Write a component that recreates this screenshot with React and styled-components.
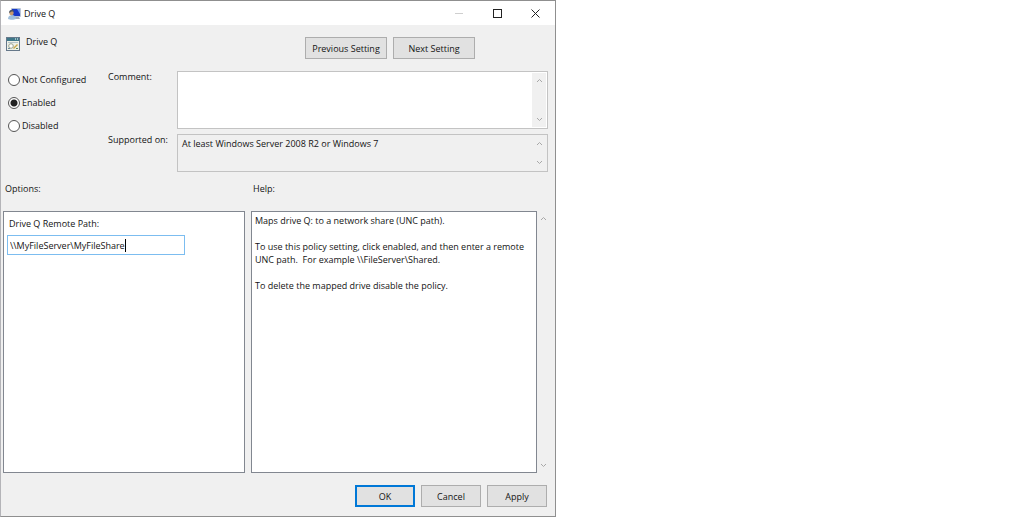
import React, { useState } from 'react';
import styled, { createGlobalStyle } from 'styled-components';

const GlobalStyle = createGlobalStyle`
  * {
    box-sizing: border-box;
  }
  body {
    margin: 0;
    background: #fff;
    color: #141414;
    font-family: 'Open Sans', 'Noto Sans', sans-serif;
    font-size: 9px;
    line-height: 13px;
  }
  button,
  input,
  textarea {
    font: inherit;
    color: inherit;
  }
`;

const Dialog = styled.main`
  display: flex;
  flex-direction: column;
  width: 100%;
  max-width: 556px;
  border: 1px solid #8f8f8f;
  border-left-color: #b4b4b8;
  background: #f0f0f0;
`;

const TitleBar = styled.header`
  display: flex;
  align-items: center;
  height: 24px;
  padding: 0 1px 0 7px;
  gap: 3px;
  background: #fff;
`;

const Title = styled.h1`
  flex: 1;
  margin: 0;
  font-size: 9px;
  font-weight: 400;
`;

const WindowButton = styled.button`
  display: flex;
  align-items: center;
  justify-content: center;
  width: 38px;
  height: 24px;
  padding: 0;
  border: 0;
  background: transparent;
  color: ${(props) => (props.disabled ? '#cfcfcf' : '#222')};
`;

const Heading = styled.section`
  display: flex;
  align-items: flex-start;
  padding: 12px 80px 0 5px;
  gap: 6px;
`;

const PolicyName = styled.h2`
  flex: 1;
  margin: 0;
  font-size: 9px;
  font-weight: 400;
  line-height: 10px;
`;

const Buttons = styled.div`
  display: flex;
  gap: 6px;
`;

const Button = styled.button`
  width: ${(props) => (props.$wide ? '82px' : '60px')};
  height: 22px;
  padding: 0;
  border: ${(props) => (props.$primary ? '2px solid #0078d7' : '1px solid #adadad')};
  background: #e1e1e1;
  white-space: nowrap;
`;

const Settings = styled.section`
  display: grid;
  grid-template-columns: 97px 65px 1fr;
  column-gap: 4px;
  padding: 12px 7px 0 6px;
`;

const States = styled.fieldset`
  display: flex;
  flex-direction: column;
  gap: 10px;
  margin: 0;
  padding: 2px 0 0;
  border: 0;
`;

const StateLabel = styled.label`
  display: flex;
  align-items: center;
  gap: 2px;
  height: 13px;
  white-space: nowrap;
`;

const Radio = styled.input`
  appearance: none;
  width: 12px;
  height: 12px;
  margin: 0 0 0 1px;
  border: 1px solid #555;
  border-radius: 50%;
  background: #fff;

  &:checked {
    background: radial-gradient(#222 0 3px, #fff 4px);
  }
`;

const Captions = styled.div`
  display: grid;
  grid-template-rows: 58px 38px;
  row-gap: 5px;
  line-height: 11px;
  white-space: nowrap;
`;

const Boxes = styled.div`
  display: grid;
  grid-template-rows: 58px 38px;
  row-gap: 5px;
`;

const ScrollBox = styled.div`
  display: flex;
  padding: 1px;
  border: 1px solid #c3c3c3;
  background: ${(props) => (props.$readOnly ? '#f0f0f0' : '#fff')};
`;

const TextArea = styled.textarea`
  flex: 1;
  min-width: 0;
  padding: 1px 3px;
  border: 0;
  outline: 0;
  resize: none;
  overflow: hidden;
  background: transparent;
`;

const Track = styled.div`
  display: flex;
  flex-direction: column;
  align-items: center;
  justify-content: space-between;
  width: ${(props) => (props.$outer ? '12px' : '14px')};
  padding: 5px 0;
  background: #f0f0f0;
  color: #a8a8a8;
`;

const Panels = styled.section`
  display: grid;
  grid-template-columns: 242px 1fr;
  column-gap: 6px;
  padding: 10px 6px 0 2px;
`;

const PanelTitle = styled.h3`
  height: 29px;
  margin: 0;
  padding-left: 2px;
  font-size: 9px;
  font-weight: 400;
`;

const Panel = styled.div`
  flex: 1;
  min-height: 262px;
  padding: 2px 3px;
  border: 1px solid #828790;
  background: #fff;
`;

const Options = styled.div`
  display: flex;
  flex-direction: column;
  gap: 5px;
  padding-top: 3px;
`;

const OptionLabel = styled.label`
  padding-left: 2px;
`;

const PathField = styled.div`
  display: flex;
  align-items: center;
  width: 178px;
  height: 20px;
  padding-left: 2px;
  border: 1px solid #7cbdf0;
`;

const PathInput = styled.input`
  field-sizing: content;
  max-width: 170px;
  padding: 0;
  border: 0;
  outline: 0;
  background: transparent;
  caret-color: transparent;
`;

const Caret = styled.span`
  width: 1px;
  height: 13px;
  background: #000;
`;

const Row = styled.div`
  display: flex;
`;

const HelpText = styled.p`
  margin: 0 0 13px;
  white-space: pre-wrap;
`;

const Footer = styled.footer`
  display: flex;
  justify-content: flex-end;
  gap: 6px;
  padding: 12px 8px 9px;
`;

function Chevron({ down }) {
  return (
    <svg width="7" height="5" viewBox="0 0 7 5" fill="none" stroke="currentColor" aria-hidden="true">
      <path d={down ? 'M1 1l2.5 2.5L6 1' : 'M1 4l2.5-2.5L6 4'} />
    </svg>
  );
}

function ScrollTrack({ outer }) {
  return (
    <Track $outer={outer}>
      <Chevron />
      <Chevron down />
    </Track>
  );
}

// monitor with a user in front of it
function WindowIcon() {
  return (
    <svg width="13" height="13" viewBox="0 0 13 13" aria-hidden="true">
      <rect x="3" y="1" width="10" height="9" rx="1" fill="#b9c4d6" />
      <rect x="4" y="2" width="8" height="7" fill="#1738c8" />
      <path d="M9 2h3v5z" fill="#6f9af0" />
      <path d="M7 10h4l1 2H6z" fill="#a6adb8" />
      <path d="M0 12c0-3 2-4 4-4s4 1 4 4c-2 1-6 1-8 0z" fill="#9fbfdd" />
      <circle cx="3.5" cy="6" r="2.2" fill="#c99a6a" />
      <path d="M1 6c0-4 5-4 5-1-2-1-3 0-5 1z" fill="#4a5365" />
    </svg>
  );
}

// settings sheet with a caption strip and a gear
function PolicyIcon() {
  return (
    <svg width="14" height="14" viewBox="0 0 14 14" aria-hidden="true">
      <rect x="0.5" y="0.5" width="13" height="13" fill="#eef0e6" stroke="#66788a" />
      <rect x="1" y="1" width="12" height="3" fill="#3e7788" />
      <path d="M9 2h1M11 2h1" stroke="#fff" />
      <path d="M2 5.5h10" stroke="#b7c4c8" />
      <circle cx="5" cy="9" r="2.3" fill="#fff" stroke="#96a08d" />
      <path d="M7 11l4-4 1 1-4 4z" fill="#c9a94c" />
      <path d="M10 11h2v1h-2z" fill="#5d8b60" />
      <path d="M2 11h2v1H2z" fill="#6e8b9f" />
    </svg>
  );
}

const STATES = ['Not Configured', 'Enabled', 'Disabled'];

export default function App() {
  const [state, setState] = useState('Enabled');
  const [comment, setComment] = useState('');
  const [path, setPath] = useState('\\\\MyFileServer\\MyFileShare');

  return (
    <>
      <GlobalStyle />
      <Dialog>
        <TitleBar>
          <WindowIcon />
          <Title>Drive Q</Title>
          <Row>
            <WindowButton disabled aria-label="Minimize">
              <svg width="9" height="9" viewBox="0 0 9 9" stroke="currentColor">
                <path d="M0 4.5h8" />
              </svg>
            </WindowButton>
            <WindowButton aria-label="Maximize">
              <svg width="9" height="9" viewBox="0 0 9 9" fill="none" stroke="currentColor">
                <rect x="0.5" y="0.5" width="8" height="8" />
              </svg>
            </WindowButton>
            <WindowButton aria-label="Close">
              <svg width="9" height="9" viewBox="0 0 9 9" stroke="currentColor">
                <path d="M0.5 0.5l8 8M8.5 0.5l-8 8" />
              </svg>
            </WindowButton>
          </Row>
        </TitleBar>

        <Heading>
          <PolicyIcon />
          <PolicyName>Drive Q</PolicyName>
          <Buttons>
            <Button $wide>Previous Setting</Button>
            <Button $wide>Next Setting</Button>
          </Buttons>
        </Heading>

        <Settings>
          <States aria-label="Policy state">
            {STATES.map((name) => (
              <StateLabel key={name}>
                <Radio
                  type="radio"
                  name="state"
                  checked={state === name}
                  onChange={() => setState(name)}
                />
                {name}
              </StateLabel>
            ))}
          </States>
          <Captions>
            <label htmlFor="comment">Comment:</label>
            <label htmlFor="supported">Supported on:</label>
          </Captions>
          <Boxes>
            <ScrollBox>
              <TextArea id="comment" value={comment} onChange={(e) => setComment(e.target.value)} />
              <ScrollTrack />
            </ScrollBox>
            <ScrollBox $readOnly>
              <TextArea
                id="supported"
                readOnly
                value="At least Windows Server 2008 R2 or Windows 7"
              />
              <ScrollTrack />
            </ScrollBox>
          </Boxes>
        </Settings>

        <Panels>
          <PanelTitle>Options:</PanelTitle>
          <PanelTitle>Help:</PanelTitle>
          <Panel>
            <Options>
              <OptionLabel htmlFor="path">Drive Q Remote Path:</OptionLabel>
              <PathField>
                <PathInput
                  id="path"
                  type="text"
                  value={path}
                  onChange={(e) => setPath(e.target.value)}
                />
                <Caret />
              </PathField>
            </Options>
          </Panel>
          <Row>
            <Panel>
              <HelpText>Maps drive Q: to a network share (UNC path).</HelpText>
              <HelpText>
                {'To use this policy setting, click enabled, and then enter a remote UNC path.  For example \\\\FileServer\\Shared.'}
              </HelpText>
              <HelpText>To delete the mapped drive disable the policy.</HelpText>
            </Panel>
            <ScrollTrack outer />
          </Row>
        </Panels>

        <Footer>
          <Button $primary>OK</Button>
          <Button>Cancel</Button>
          <Button>Apply</Button>
        </Footer>
      </Dialog>
    </>
  );
}
